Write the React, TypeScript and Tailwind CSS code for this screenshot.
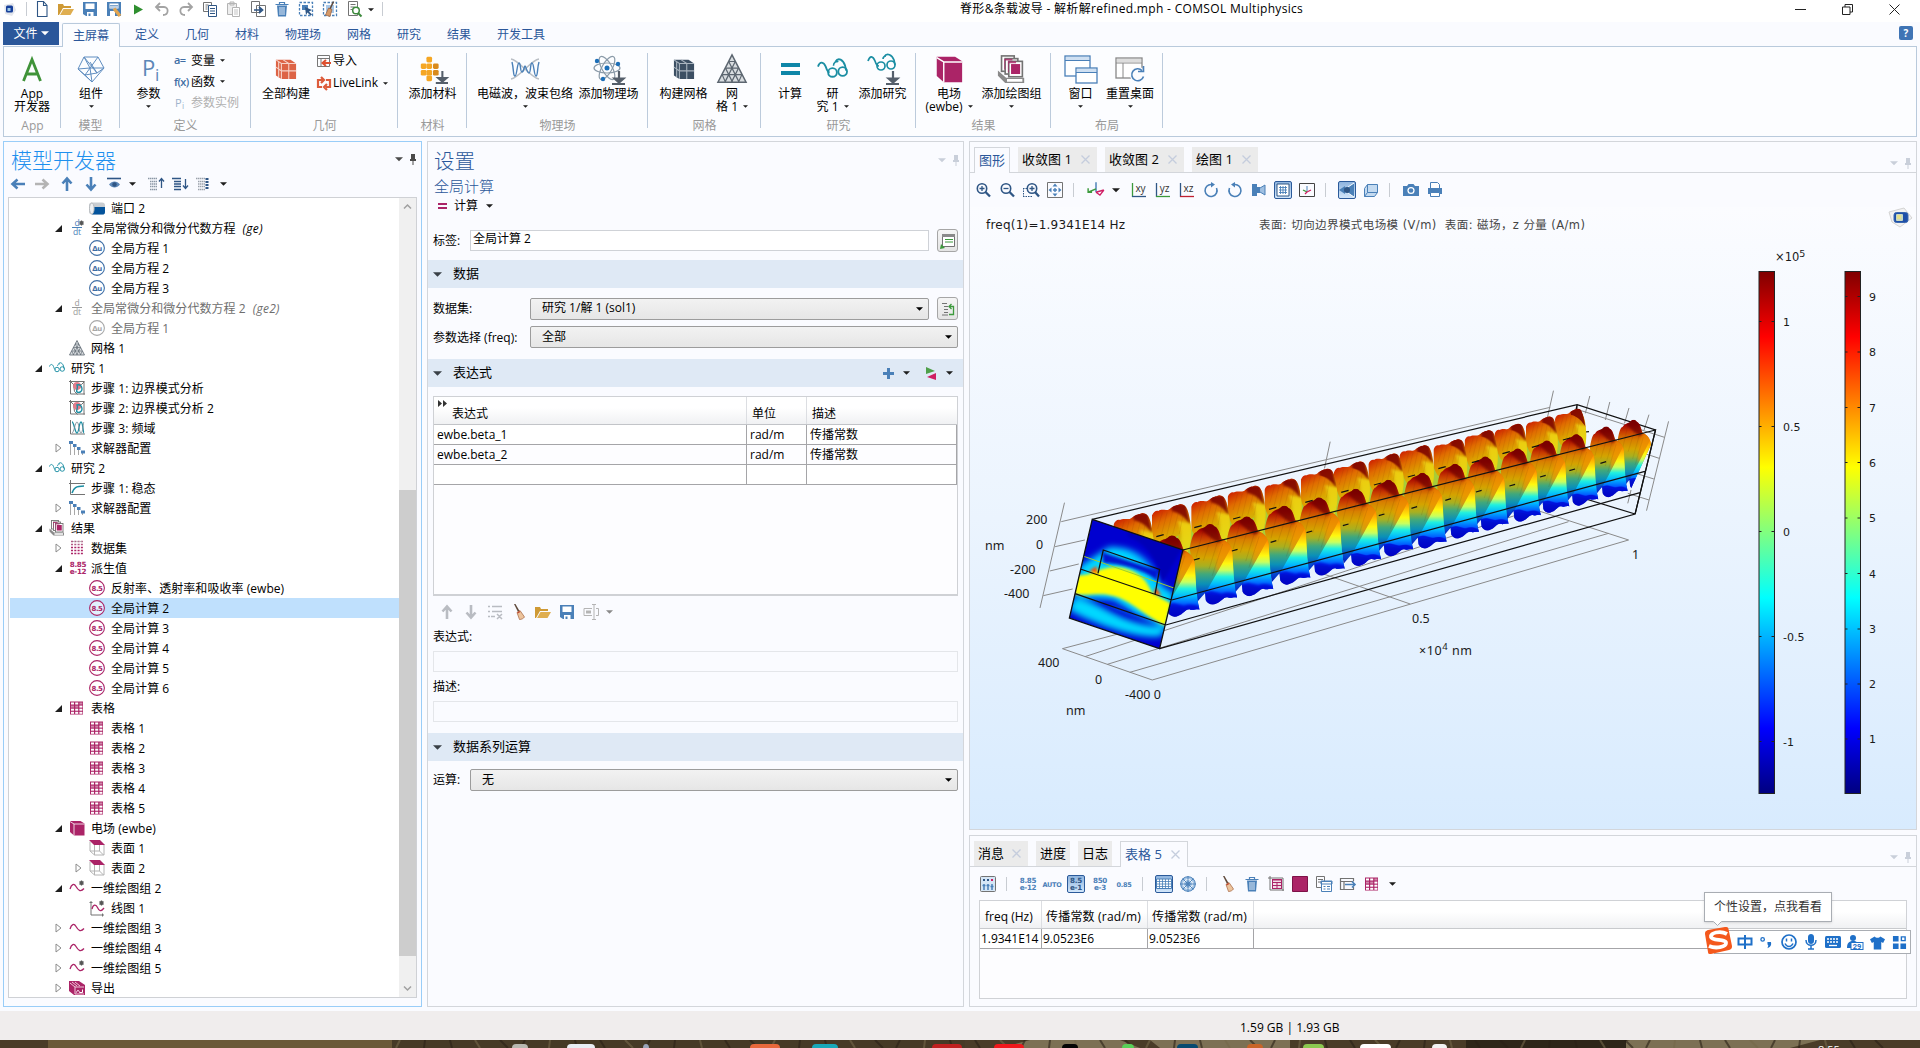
import React from "react";

const BLUE = "#4a80b8";
const NAVY = "#2f5685";
const MAG = "#ab2467";
const TEAL = "#1b8ea3";
const GRAY = "#737373";
const LG = "#b4b4b4";

type SvgProps = { w?: number; h?: number; vb?: string; children: React.ReactNode };
const Svg = ({ w = 16, h, vb = "0 0 16 16", children }: SvgProps) => (
  <svg width={w} height={h ?? w} viewBox={vb} fill="none" className="block shrink-0 overflow-visible">
    {children}
  </svg>
);

const Down = ({ c = "#1e1e1e", w = 7 }: { c?: string; w?: number }) => (
  <Svg w={w} h={w / 2 + 0.5} vb="0 0 8 4">
    <path d="M0 0h8L4 4z" fill={c} />
  </Svg>
);

const Pin = ({ c }: { c: string }) => (
  <div className="flex items-center gap-[6px]">
    <Down c={c} w={8} />
    <Svg w={8} h={11} vb="0 0 8 11">
      <path d="M2 0h4v5h1v2H4.5v4h-1V7H1V5h1z" fill={c} />
    </Svg>
  </div>
);

const wave = "M1 9c1.500-5 4-6 6-2.500S11.500 12.500 15 8.500";

const tableIcon = (
  <Svg>
    <rect x="1" y="1.500" width="13" height="13" fill={MAG} />
    {[0, 1, 2, 3].map((r) =>
      [0, 1, 2].map((c) => (
        <rect key={`${r}${c}`} x={2 + c * 4.200} y={2.500 + r * 3.100} width="3" height="2" fill={(r === 1 && c < 2) || (r === 0 && c === 2) ? "#cf86aa" : "#fff"} />
      ))
    )}
  </Svg>
);

const star = (
  <g stroke="#555" strokeWidth="1.100">
    <path d="M12.500 .5v5M10 3h5M10.700 1.200l3.600 3.600M14.300 1.200l-3.600 3.600" />
  </g>
);

const circleText = (t: string, c: string) => (
  <Svg>
    <circle cx="8" cy="8" r="7.400" stroke={c} strokeWidth="1.100" fill="#ffffff88" />
    <text x="8" y="10.500" textAnchor="middle" fontSize="7" fontWeight="700" fontFamily="DejaVu Sans" letterSpacing="-0.500" fill={c}>
      {t}
    </text>
  </Svg>
);

const ddt = (c: string, s: boolean) => (
  <Svg w={16} h={18} vb="0 -1 16 18">
    <text x="8" y="6" textAnchor="middle" fontSize="8.500" fontFamily="Open Sans" fill={c}>d</text>
    <path d="M3 7.500h10" stroke={c} />
    <text x="8" y="15" textAnchor="middle" fontSize="8.500" fontFamily="Open Sans" fill={c}>dt</text>
    {s && star}
  </Svg>
);

const meshTri = (w = 16) => (
  <Svg w={w} vb="0 0 32 32">
    <path d="M16 1L31 30H1z" fill="#d9dde0" stroke="#5c6670" strokeWidth="1.600" />
    <path d="M12.500 8h7M9 15h14M5.500 22h21M12.500 8l11 22M19.500 8L8.500 30M9 15l7.500 15M23 15l-7.500 15M5.500 22l3.500 8M26.500 22l-3.500 8" stroke="#5c6670" strokeWidth="1.300" />
  </Svg>
);

const glasses = (w = 16) => (
  <Svg w={w} vb="0 0 32 32">
    <path d="M1 13c2-6 6-5 8 0 1 3 2 6 4 6M19 8c3-5 8-2 10 4l1 5" stroke={TEAL} strokeWidth="1.900" />
    <circle cx="16" cy="19" r="4.500" stroke={TEAL} strokeWidth="1.900" />
    <circle cx="26.500" cy="18" r="4.500" stroke={TEAL} strokeWidth="1.900" />
    <path d="M17 12c0-3 3-5 5-4" stroke={TEAL} strokeWidth="1.600" />
  </Svg>
);

const cubeMag = (w = 16) => (
  <Svg w={w} vb="0 0 32 32">
    <path d="M2 2h21l8 5v24H10L2 24z" fill={MAG} />
    <path d="M2 3l8 5v23M10 8h21" stroke="#fff" strokeWidth="1.600" />
  </Svg>
);

const results = (w = 16) => (
  <Svg w={w} vb="0 0 32 32">
    <g fill="#fff" stroke={GRAY} strokeWidth="1.800">
      <rect x="5" y="1" width="14" height="17" />
      <rect x="9" y="4" width="14" height="17" />
      <rect x="13" y="7" width="15" height="17" />
    </g>
    <path d="M8 4h9v2H9v10H8zM12 7h9v2h-8v10h-1z" fill={MAG} opacity=".8" />
    <rect x="15.500" y="10" width="10" height="11" fill={MAG} />
    <path d="M1 17l9 8h20v6H9L1 23z" fill="#8a8a8a" />
    <path d="M11 26.500h17v3H11z" fill="#fff" />
  </Svg>
);

const steps = (
  <Svg>
    <path d="M1.500 4v11M5.500 6v9M9.500 9v6M13.500 12v3" stroke="#a8a8a8" />
    <path d="M0 1h4v3H0zM4 4h3.500v3H4zM8 7h3.500v3H8zM12 10.500h4v3h-4z" fill={BLUE} />
  </Svg>
);

const bma = (
  <Svg>
    <path d="M1.500 0v14H16M0 1.500h15v13M1.500 1.500l3 3h8l3-3M4.500 4.500l1 7 3 3" stroke={GRAY} />
    <path d="M5 3c3-2 6-1 7 2s-1 4-3 5-5-2-5-4z" fill="#e47c8c" />
    <path d="M8 5c3-1 5 1 5 4s-3 4-5 3 2-3 0-7z" stroke={TEAL} strokeWidth="1.400" />
  </Svg>
);

const surf = (
  <Svg>
    <path d="M1 1.500v9.500l4.500 4h9.500V4.500H5.500M5.500 4.500V15M1 11h9.500V4M10.500 11l4 4" stroke={LG} />
    <path d="M0 0h11l5 5H5z" fill={MAG} />
  </Svg>
);

const exportIcon = (
  <Svg>
    <path d="M0 1h10l6 4v10H5L0 11z" fill={MAG} />
    <path d="M1 3l5 4h9M3 2l5 4M6 2l5 4M6 7v7h9" stroke="#f0c8da" />
    <path d="M7.500 12.500c1-3 2-3 3 0h3v-3" stroke="#fff" />
  </Svg>
);

const port = (
  <Svg>
    <rect x="0" y="2.500" width="16" height="12" rx="3" fill="#c9cdd1" />
    <path d="M4 7h12v5c0 2-1 2.500-2.500 2.500H3c1-1 1.500-4 1-7.500z" fill="#04549c" />
    <ellipse cx="2.800" cy="8.500" rx="2.300" ry="5.500" fill="#eef0f2" stroke="#b5b9bd" />
  </Svg>
);

const step3 = (
  <Svg>
    <path d="M1.500 0v14H16" stroke={GRAY} />
    <path d="M3 2c2 0 3 11 5 11s2-11 4-11 2 11 3 11" stroke={TEAL} strokeWidth="1.300" />
    <path d="M3 13c2 0 3-11 5-11s2 11 4 11 2-11 3-11" stroke="#7c8a94" strokeWidth=".9" />
  </Svg>
);

const stationary = (
  <Svg>
    <path d="M1.500 0v14.500H16M0 3.500h16" stroke={GRAY} />
    <path d="M3 13c1.500-5 4-7 12-7" stroke={TEAL} strokeWidth="1.600" />
  </Svg>
);

const dataset = (
  <Svg>
    {[1, 4, 7, 10, 13].map((y, i) => (
      <path key={y} d={`M2 ${y}.500h12`} stroke={i < 2 ? "#b35b86" : MAG} strokeWidth="1.300" strokeDasharray="2 1.300" />
    ))}
    <path d="M4 1.500h9" stroke="#b9b9b9" strokeDasharray="2 1.300" />
  </Svg>
);

const sci = (a: string, b: string, c: string) => (
  <Svg w={18} h={16} vb="0 0 18 16">
    <text x="9" y="7" textAnchor="middle" fontSize="7.200" fontWeight="700" fontFamily="DejaVu Sans" fill={c} letterSpacing="-.3">{a}</text>
    <text x="9" y="14" textAnchor="middle" fontSize="7.200" fontWeight="700" fontFamily="DejaVu Sans" fill={c} letterSpacing="-.3">{b}</text>
  </Svg>
);

const sci1 = (a: string) => (
  <Svg w={18} h={16} vb="0 0 18 16">
    <text x="9" y="11" textAnchor="middle" fontSize="6.500" fontWeight="700" fontFamily="DejaVu Sans" fill={BLUE} letterSpacing="-.3">{a}</text>
  </Svg>
);

const waveIcon = (s: boolean) => (
  <Svg>
    <path d={wave} stroke={MAG} strokeWidth="1.300" />
    {s && star}
  </Svg>
);

const linePlot = (
  <Svg>
    <path d="M2 1v14h13M.5 2.500h3M13.500 13.500v3" stroke={GRAY} />
    <path d="M3 9c1-5 4-5 5.500-1.500S12 12 15 8" stroke={MAG} strokeWidth="1.300" />
    {star}
  </Svg>
);

type Row = { l: number; t: string; i: React.ReactNode; a?: "o" | "c"; it?: string; gray?: boolean; sel?: boolean };
const geq = circleText("Δu", "#3f6ea5");
const ev = circleText("8.5", MAG);
const rows: Row[] = [
  { l: 3, t: "端口 2", i: port },
  { l: 2, t: "全局常微分和微分代数方程", it: "(ge)", i: ddt(BLUE, true), a: "o" },
  { l: 3, t: "全局方程 1", i: geq },
  { l: 3, t: "全局方程 2", i: geq },
  { l: 3, t: "全局方程 3", i: geq },
  { l: 2, t: "全局常微分和微分代数方程 2", it: "(ge2)", i: ddt("#999", false), a: "o", gray: true },
  { l: 3, t: "全局方程 1", i: circleText("Δu", "#a8a8a8"), gray: true },
  { l: 2, t: "网格 1", i: meshTri() },
  { l: 1, t: "研究 1", i: glasses(), a: "o" },
  { l: 2, t: "步骤 1: 边界模式分析", i: bma },
  { l: 2, t: "步骤 2: 边界模式分析 2", i: bma },
  { l: 2, t: "步骤 3: 频域", i: step3 },
  { l: 2, t: "求解器配置", i: steps, a: "c" },
  { l: 1, t: "研究 2", i: glasses(), a: "o" },
  { l: 2, t: "步骤 1: 稳态", i: stationary },
  { l: 2, t: "求解器配置", i: steps, a: "c" },
  { l: 1, t: "结果", i: results(), a: "o" },
  { l: 2, t: "数据集", i: dataset, a: "c" },
  { l: 2, t: "派生值", i: sci("8.85", "e-12", MAG), a: "o" },
  { l: 3, t: "反射率、透射率和吸收率 (ewbe)", i: ev },
  { l: 3, t: "全局计算 2", i: ev, sel: true },
  { l: 3, t: "全局计算 3", i: ev },
  { l: 3, t: "全局计算 4", i: ev },
  { l: 3, t: "全局计算 5", i: ev },
  { l: 3, t: "全局计算 6", i: ev },
  { l: 2, t: "表格", i: tableIcon, a: "o" },
  { l: 3, t: "表格 1", i: tableIcon },
  { l: 3, t: "表格 2", i: tableIcon },
  { l: 3, t: "表格 3", i: tableIcon },
  { l: 3, t: "表格 4", i: tableIcon },
  { l: 3, t: "表格 5", i: tableIcon },
  { l: 2, t: "电场 (ewbe)", i: cubeMag(), a: "o" },
  { l: 3, t: "表面 1", i: surf },
  { l: 3, t: "表面 2", i: surf, a: "c" },
  { l: 2, t: "一维绘图组 2", i: waveIcon(true), a: "o" },
  { l: 3, t: "线图 1", i: linePlot },
  { l: 2, t: "一维绘图组 3", i: waveIcon(false), a: "c" },
  { l: 2, t: "一维绘图组 4", i: waveIcon(false), a: "c" },
  { l: 2, t: "一维绘图组 5", i: waveIcon(true), a: "c" },
  { l: 2, t: "导出", i: exportIcon, a: "c" },
];
const indent: Record<number, string> = { 1: "pl-[25px]", 2: "pl-[45px]", 3: "pl-[65px]" };

const TreeRow = ({ r }: { r: Row }) => (
  <div className={`flex h-5 shrink-0 items-center ${indent[r.l]} ${r.sel ? "bg-[#bfe0fd]" : ""} ${r.gray ? "text-[#6e6e6e]" : ""}`}>
    <div className="w-[14px] shrink-0">
      {r.a === "o" && (
        <Svg w={7} vb="0 0 7 7">
          <path d="M7 0v7H0z" fill="#1e1e1e" />
        </Svg>
      )}
      {r.a === "c" && (
        <Svg w={7} h={10} vb="0 0 7 10">
          <path d="M1 1l5 4-5 4z" stroke="#8c8c8c" />
        </Svg>
      )}
    </div>
    <div className="flex w-[22px] shrink-0 items-center">{r.i}</div>
    <span className="pt-[2px] tracking-[0.050px]">{r.t}</span>
    {r.it && <span className="ml-[7px] pt-[2px] tracking-[0.300px] italic">{r.it}</span>}
  </div>
);

/* ---------- shared toolbar icons ---------- */
const folder = (
  <Svg>
    <path d="M0 3h5l1 2h7v2H5l-4 7H0z" fill="#cf9a35" />
    <path d="M5.500 8H16l-3.500 6H2z" fill="#dfae50" />
  </Svg>
);
const save = (
  <Svg>
    <path d="M1 1h14v14H4l-3-2z" fill={BLUE} />
    <path d="M3.500 2.500h9v5.500h-9z" fill="#fff" />
    <path d="M5 11h6.500v4H5z" fill="#fff" />
    <path d="M6.500 12.500h2V15h-2z" fill={BLUE} />
  </Svg>
);
const broom = (
  <Svg>
    <path d="M3 0l1.500 0 4 7-1.500 1z" fill="#5f4a3c" />
    <path d="M6 8.500l3-2 4.500 6.500c-1 1.500-3 2.500-5 2.500z" fill="#ecc39c" stroke="#a4623c" strokeWidth=".7" />
    <path d="M6.500 9l2.500-1.500" stroke="#c0452d" strokeWidth="1.200" />
  </Svg>
);
const trash = (
  <Svg>
    <path d="M1.500 3.500h13M5.500 3V1.500h5V3" stroke={BLUE} strokeWidth="1.200" />
    <path d="M3 4.500h10l-1 11H4z" fill={BLUE} />
    <path d="M6 6v8M8 6v8M10 6v8" stroke="#e4eefa" />
  </Svg>
);
const doc = (c: string) => (
  <Svg>
    <path d="M1.500 1.500h8v9h-8z" fill="#fff" stroke={GRAY} />
    <path d="M3.500 4h3M3.500 6h2M3.500 8h2" stroke={GRAY} />
    <path d="M6.500 4.500h8v11h-8z" fill="#fff" stroke={c} />
    <path d="M8 7.500h5M8 10h5M8 12.500h5" stroke={c} />
  </Svg>
);
const dashed = <rect x="1.500" y="1.500" width="13" height="13" stroke={BLUE} strokeWidth="1.300" strokeDasharray="2.500 1.500" />;

const quick: React.ReactNode[] = [
  <Svg><path d="M3.500 .5h6l3.500 4v11H3.500zM9.500 .5v4H13" fill="#fff" stroke={NAVY} strokeWidth="1.100" /></Svg>,
  folder,
  save,
  <Svg><path d="M1 1h14v14H1z" fill={BLUE} /><path d="M3.500 2.500h9v5h-9zM4 10h5v5H4z" fill="#fff" /><path d="M4 4.500h8M4 6h8" stroke={BLUE} strokeWidth=".7" /><path d="M8 7.500l6 7.500" stroke="#e2a550" strokeWidth="3.400" /></Svg>,
  <Svg><path d="M4 3.500l9 5-9 5z" fill="#2f8f2f" /></Svg>,
  <Svg><path d="M2 6h8c5 0 5 8-1 8M6 2L2 6l4 4" stroke="#a3a3a3" strokeWidth="1.800" /></Svg>,
  <Svg><path d="M14 6H6c-5 0-5 8 1 8M10 2l4 4-4 4" stroke="#a3a3a3" strokeWidth="1.800" /></Svg>,
  doc(NAVY),
  <Svg><path d="M1.500 2.500h9v11h-9zM4 1h4v3H4z" fill="#eee" stroke={LG} /><path d="M6.500 6.500h7v9h-7z" fill="#fff" stroke={LG} /><path d="M8 9h4M8 11h4M8 13h4" stroke={LG} strokeWidth=".8" /></Svg>,
  <Svg><path d="M1.500 .5h8v11h-8zM6.500 4.500h9v11h-9z" fill="#fff" stroke={GRAY} /><path d="M4 9h7M9 6l3.500 3L9 12" stroke={NAVY} strokeWidth="1.700" /></Svg>,
  trash,
  <Svg>{dashed}<path d="M4 4h6v5H4z" fill={BLUE} /><path d="M7 6l7 3-3 1.500 3 3-1.500 1-3-3L8 14z" fill={NAVY} /></Svg>,
  <Svg>{dashed}<path d="M4 4h8v8H4z" fill="#a9c8e8" /><path d="M11.500 .5L8 8" stroke="#5f4a3c" strokeWidth="1.600" /><path d="M6.500 7l3.500 1.500-2 7-4.500-1.500z" fill="#d79a68" stroke="#8a4f2c" strokeWidth=".6" /></Svg>,
  <Svg><path d="M2.500 .5h9v14h-9z" fill="#fff" stroke={GRAY} /><path d="M4.500 3.500h5M4.500 6h4M4.500 8.500h2" stroke={GRAY} /><circle cx="10" cy="9.500" r="3.300" fill="#fff" stroke="#3c8a3c" strokeWidth="1.500" /><path d="M12 12l3.500 3.500" stroke="#3c8a3c" strokeWidth="2" /></Svg>,
];

const VLine = ({ h = "h-[14px]" }: { h?: string }) => <div className={`w-px bg-[#c8ccd2] ${h}`} />;

/* ---------- ribbon ---------- */
const plusDown = <path d="M26 18v8M21.500 25.500l4.500 4 4.500-4zM19 31h13" stroke="#555f6b" strokeWidth="2.200" fill="#555f6b" />;
type Btn = { w: string; icon: React.ReactNode; a: string; b?: string; dd?: boolean };
const Big = ({ w, icon, a, b, dd }: Btn) => (
  <div className={`flex shrink-0 flex-col items-center ${w}`}>
    <div className="flex h-[36px] items-center justify-center">{icon}</div>
    <div className="h-[13px] text-center leading-[13px] whitespace-nowrap">{a}</div>
    <div className="flex h-[13px] items-center justify-center gap-[5px] leading-[13px] whitespace-nowrap">
      {b && <span>{b}</span>}
      {dd && <Down w={5} />}
    </div>
  </div>
);
const Group = ({ w, label, children }: { w: string; label: string; children: React.ReactNode }) => (
  <div className={`relative flex h-full shrink-0 flex-col ${w}`}>
    <div className="flex h-[67px] pt-[4px]">{children}</div>
    <div className="mt-[4px] text-center leading-[16px] text-[#999]">{label}</div>
    <div className="absolute top-[6px] right-0 h-[75px] w-px bg-[#bccbdc]" />
  </div>
);
const Mini = ({ icon, t, dd, gray }: { icon: React.ReactNode; t: string; dd?: boolean; gray?: boolean }) => (
  <div className={`flex h-[22px] items-center whitespace-nowrap ${gray ? "text-[#b0b0b0]" : ""}`}>
    <div className="flex w-[17px] shrink-0 items-center">{icon}</div>
    <span>{t}</span>
    {dd && <span className="ml-[5px]"><Down w={5} /></span>}
  </div>
);

const atom = (
  <Svg w={32} vb="0 0 32 32">
    <g stroke="#8a9aa8" strokeWidth="1.200">
      <ellipse cx="14" cy="15" rx="13" ry="5" />
      <ellipse cx="14" cy="15" rx="13" ry="5" transform="rotate(60 14 15)" />
      <ellipse cx="14" cy="15" rx="13" ry="5" transform="rotate(120 14 15)" />
    </g>
    <g fill="#1d6fb8">
      <circle cx="14" cy="15" r="2.500" /><circle cx="4" cy="8" r="2.200" /><circle cx="25" cy="11" r="2.200" /><circle cx="10" cy="26" r="2.200" />
    </g>
    {plusDown}
  </Svg>
);
const brick = (w: number, f: string, s: string) => (
  <Svg w={w} vb="0 0 24 24">
    <path d="M1 2h16l6 4v17H7L1 19z" fill={f} />
    <path d="M1 2l6 4h16M7 6v17M1 10l6 4h16M15 6v17M9 2l6 4M4 4v17" stroke={s} strokeWidth="1.200" />
  </Svg>
);
const windowIcon = (
  <Svg w={34} h={32} vb="0 0 34 32">
    <g fill="#fff" stroke={BLUE} strokeWidth="1.300">
      <rect x="1" y="3" width="25" height="20" /><rect x="12" y="15" width="21" height="15" />
    </g>
    <path d="M2 4h23v3H2zM13 16h19v3H13z" fill="#cfe0f2" />
    <path d="M1 7.500h25M12 19.500h21" stroke={BLUE} />
  </Svg>
);
const resetIcon = (
  <Svg w={30} h={28} vb="0 0 30 28">
    <rect x="1" y="3" width="26" height="20" fill="#fff" stroke="#888" strokeWidth="1.300" />
    <path d="M2 4h24v3H2z" fill="#ddd" /><path d="M1 8h26M8 8v15" stroke="#888" />
    <circle cx="23" cy="20" r="8" fill="#fbfcff" />
    <path d="M27 15.500a6 6 0 1 0 1.500 6M28.500 11v5.500H23" stroke={BLUE} strokeWidth="1.600" />
  </Svg>
);

const Ribbon = () => (
  <div className="mx-[3px] flex h-[90px] border-x border-b border-[#b9cadc] bg-[#fcfdff]">
    <Group w="w-[57px]" label="App">
      <Big w="w-[56px]" icon={<Svg w={24} h={30} vb="0 0 24 30"><path d="M3.500 27L12 5.500L20.500 27M6.500 20h11" stroke="#3f9339" strokeWidth="2.800" /></Svg>} a="App" b="开发器" />
    </Group>
    <Group w="w-[59px]" label="模型">
      <Big w="ml-[1px] w-[58px]" a="组件" dd icon={
        <Svg w={28} vb="0 0 28 28">
          <path d="M7 2h14l6 11-12 14L1 14zM7 2l6 11-12 1M13 13l14 0M13 13l2 14M21 2L8 20M7 2l13 16M1 14l7 6 7 7M20 18l-12 2M20 18l7-5M13 7l7 11" stroke="#5f8dc0" strokeWidth="1" />
        </Svg>} />
    </Group>
    <Group w="w-[131px]" label="定义">
      <Big w="ml-[3px] w-[51px]" a="参数" dd icon={
        <Svg w={28} h={34} vb="0 0 28 34">
          <text x="7" y="24" fontSize="22" fontFamily="Open Sans" fill="#5b87b8">P</text>
          <text x="20" y="29" fontSize="17" fontFamily="Open Sans" fill="#5b87b8">i</text>
        </Svg>} />
      <div className="-mt-[1px] flex flex-col">
        <Mini t="变量" dd icon={<span className="text-[11px] font-semibold tracking-tighter text-[#3f6ea5]">a=</span>} />
        <Mini t="函数" dd icon={<span className="text-[11px] font-semibold tracking-tighter text-[#3f6ea5]">f(x)</span>} />
        <Mini t="参数实例" gray icon={<Svg><text x="1" y="12" fontSize="11" fontFamily="Open Sans" fill="#9fb4cc">P</text><text x="8" y="14" fontSize="8.500" fontFamily="Open Sans" fill="#9fb4cc">i</text></Svg>} />
      </div>
    </Group>
    <Group w="w-[147px]" label="几何">
      <Big w="ml-[5px] w-[60px]" a="全部构建" icon={brick(22, "#dd6446", "#f6d2c8")} />
      <div className="-mt-[1px] flex flex-col">
        <Mini t="导入" icon={<Svg><path d="M1.500 2.500h12v11h-12zM1.500 5.500h12M5 5.500v8" stroke="#777" /><path d="M15 10H7M10 7l-3.500 3 3.500 3" stroke="#dd5030" strokeWidth="2" /></Svg>} />
        <Mini t="LiveLink" dd icon={<Svg><path d="M6 12H2V5h5M10 12h4V5h-4M5 2l3 3-3 3M11 9l-3 3 3 3" stroke="#dd5c3c" strokeWidth="2.200" /></Svg>} />
      </div>
    </Group>
    <Group w="w-[69px]" label="材料">
      <Big w="w-[69px]" a="添加材料" icon={
        <Svg w={30} vb="0 0 32 32">
          {[[9, 3], [3, 10], [9, 10], [16, 10], [3, 17], [9, 17], [16, 17], [9, 23]].map(([x, y]) => (
            <rect key={`${x}-${y}`} x={x} y={y} width="6" height="6" rx="1.500" fill={x > 10 ? "#d98a1c" : "#f5a623"} />
          ))}
          {plusDown}
        </Svg>} />
    </Group>
    <Group w="w-[181px]" label="物理场">
      <Big w="ml-[3px] w-[110px]" a="电磁波，波束包络" dd icon={
        <Svg w={30} vb="0 0 30 30">
          <path d="M1 5c8 1 20 19 28 20M1 25C9 24 21 6 29 5" stroke="#b9bec4" strokeWidth="1.600" />
          <path d="M2 8c2 8 1 14 3 14s2-13 4-13 1 9 3 9 2-6 3-6 2 7 4 7 1-10 3-10 2 13 4 13 1-8 3-14" stroke="#4a80b8" strokeWidth="1.400" />
        </Svg>} />
      <Big w="w-[57px]" a="添加物理场" icon={atom} />
    </Group>
    <Group w="w-[113px]" label="网格">
      <Big w="w-[71px]" a="构建网格" icon={brick(22, "#3c4f63", "#a9b4bf")} />
      <Big w="w-[26px]" a="网" b="格 1" dd icon={meshTri(30)} />
    </Group>
    <Group w="w-[155px]" label="研究">
      <Big w="w-[58px]" a="计算" icon={<div className="flex flex-col gap-[4px]"><div className="h-[4px] w-[19px] bg-[#0e86a8]" /><div className="h-[4px] w-[19px] bg-[#0e86a8]" /></div>} />
      <Big w="w-[27px]" a="研" b="究 1" dd icon={glasses(31)} />
      <Big w="ml-[2px] w-[69px]" a="添加研究" icon={
        <Svg w={32} vb="0 0 32 32">
          <path d="M1 8c2-6 5-5 7 0 1 3 2 5 4 5M17 4c3-5 8-2 10 3l1 5M16 6c0-2 2-3 3-3" stroke={TEAL} strokeWidth="1.700" />
          <circle cx="14" cy="13" r="4" stroke={TEAL} strokeWidth="1.700" /><circle cx="24" cy="12" r="4" stroke={TEAL} strokeWidth="1.700" />
          {plusDown}
        </Svg>} />
    </Group>
    <Group w="w-[135px]" label="结果">
      <Big w="w-[66px]" a="电场" b="(ewbe)" dd icon={cubeMag(28)} />
      <Big w="w-[59px]" a="添加绘图组" dd icon={results(29)} />
    </Group>
    <Group w="w-[112px]" label="布局">
      <Big w="ml-[2px] w-[55px]" a="窗口" dd icon={windowIcon} />
      <Big w="w-[44px]" a="重置桌面" dd icon={resetIcon} />
    </Group>
  </div>
);

/* ---------- model builder ---------- */
const arrow = (rot: number, c: string, w = 16) => (
  <Svg w={w}>
    <path d="M15 8H3M7.500 3.500L2.500 8l5 4.500" stroke={c} strokeWidth="2.600" transform={`rotate(${rot} 8 8)`} />
  </Svg>
);
const listIcon = (c: string, up: number) => (
  <Svg>
    <path d="M0 2.500h9M2 5.500h7M2 8h7M2 10.500h7M2 13.500h7" stroke={c} strokeWidth="1.300" strokeDasharray={up ? "1.500 .5" : undefined} />
    {up !== 2 && <path d={up === 0 ? "M13.500 3v9M11 9.500l2.500 3 2.500-3" : "M13.500 12V3M11 5.500L13.500 2.500l2.500 3"} stroke={NAVY} strokeWidth="1.300" />}
    {up === 2 && <path d="M11 2v12" stroke={NAVY} strokeWidth="3" strokeDasharray="2 1" />}
  </Svg>
);

const ModelBuilder = () => (
  <section className="flex w-[419px] shrink-0 flex-col border border-[#99cdf8] px-[4px]">
    <div className="flex h-[34px] items-center justify-between pl-[3px]">
      <h1 className="pt-[2px] text-[21px] leading-[30px] font-light text-[#1e90ee]">模型开发器</h1>
      <Pin c="#4a4a4a" />
    </div>
    <div className="flex h-[21px] items-center pb-[5px]">
      <div className="flex w-[20px] justify-center">{arrow(0, BLUE)}</div>
      <div className="flex w-[27px] justify-center">{arrow(180, "#b4b4b4")}</div>
      <div className="flex w-[23px] justify-center">{arrow(90, BLUE)}</div>
      <div className="flex w-[26px] justify-center">{arrow(270, BLUE)}</div>
      <div className="flex w-[20px] justify-center">
        <Svg><path d="M1 2.500h14" stroke={NAVY} strokeWidth="1.600" /><path d="M3 8.500c3-4 8-4 11 0-3 4-8 4-11 0z" fill="#5d88b8" /><circle cx="8.500" cy="8.500" r="2.200" fill={NAVY} /></Svg>
      </div>
      <div className="flex w-[17px] justify-center"><Down /></div>
      <div className="ml-[3px] flex w-[24px] justify-center">{listIcon("#8b97a5", 1)}</div>
      <div className="flex w-[24px] justify-center">{listIcon(NAVY, 0)}</div>
      <div className="flex w-[24px] justify-center">{listIcon("#9aa1aa", 2)}</div>
      <div className="flex w-[14px] justify-center"><Down /></div>
    </div>
    <div className="flex h-[801px] border border-[#cfd1d5] bg-white">
      <div className="flex flex-1 flex-col overflow-hidden pl-px text-[12px] leading-[18px] whitespace-nowrap">
        {rows.map((r, k) => (
          <TreeRow key={k} r={r} />
        ))}
      </div>
      <div className="flex w-[17px] flex-col items-center bg-[#f0f0f0]">
        <div className="flex h-[17px] items-center"><Svg w={9} vb="0 0 9 9"><path d="M1 6.500l3.500-3.500L8 6.500" stroke="#a0a0a0" strokeWidth="1.500" /></Svg></div>
        <div className="mt-[275px] h-[466px] w-full bg-[#cdcdcd]" />
        <div className="mt-auto flex h-[17px] items-center"><Svg w={9} vb="0 0 9 9"><path d="M1 2.500L4.500 6 8 2.500" stroke="#a0a0a0" strokeWidth="1.500" /></Svg></div>
      </div>
    </div>
  </section>
);

/* ---------- settings ---------- */
const Section = ({ t, mt, children }: { t: string; mt: string; children?: React.ReactNode }) => (
  <div className={`flex h-[28px] shrink-0 items-center bg-[#dfe9f5] pr-[10px] pl-[5px] ${mt}`}>
    <Down c="#3a4046" w={9} />
    <span className="ml-[11px] pb-px text-[13px]">{t}</span>
    {children}
  </div>
);
const Select = ({ t, w }: { t: string; w: string }) => (
  <div className={`flex h-[22px] items-center justify-between rounded-[2px] border border-[#9c9c9c] bg-linear-to-b from-[#f2f2f2] to-[#e6e6e6] pr-[5px] pl-[11px] ${w}`}>
    <span className="pb-px">{t}</span>
    <Down c="#000" w={7} />
  </div>
);
const SideBtn = ({ children }: { children: React.ReactNode }) => (
  <div className="flex h-[23px] w-[21px] items-center justify-center rounded-[3px] border border-[#a6a6a6] bg-linear-to-b from-[#f5f5f5] to-[#e4e4e4]">{children}</div>
);
const exprCells = [
  ["ewbe.beta_1", "rad/m", "传播常数"],
  ["ewbe.beta_2", "rad/m", "传播常数"],
  ["", "", ""],
];

const Settings = () => (
  <section className="flex w-[537px] shrink-0 flex-col border border-[#d3d6db]">
    <div className="flex h-[36px] items-center justify-between pr-[3px] pl-[6px]">
      <h1 className="pt-[2px] text-[20.500px] leading-[30px] font-light text-[#2b579a]">设置</h1>
      <Pin c="#c9cfda" />
    </div>
    <div className="-mt-px pb-px pl-[6px] text-[15px] leading-[18px] font-light text-[#2b579a]">全局计算</div>
    <div className="flex h-[19px] items-center pl-[10px]">
      <div className="flex w-[9px] flex-col gap-[2px]"><div className="h-[2px] bg-[#ab2467]" /><div className="h-[2px] bg-[#ab2467]" /></div>
      <span className="mr-[8px] ml-[7px]">计算</span>
      <Down w={7} />
    </div>
    <div className="mt-[14px] flex h-[23px] items-center pl-[5px]">
      <span className="w-[37px]">标签:</span>
      <div className="mr-[8px] flex h-[21px] w-[459px] items-center border border-[#cfd2d7] bg-white pb-[3px] pl-[2px]">全局计算 2</div>
      <SideBtn><Svg><path d="M2.500 1.500h12v12h-12z" fill="#fff" stroke={GRAY} /><path d="M2 1h13v3H2z" fill="#8a8a8a" /><path d="M5 6.500h8M5 9h8" stroke="#3c9a3c" /><path d="M0 16l1-5 4 4z" fill="#3c9a3c" /></Svg></SideBtn>
    </div>
    <Section t="数据" mt="mt-[8px]" />
    <div className="mt-[9px] flex h-[23px] items-center pl-[5px]">
      <span className="w-[97px] pt-px">数据集:</span>
      <Select t="研究 1/解 1 (sol1)" w="mr-[8px] w-[399px]" />
      <SideBtn><Svg><path d="M2 2.500h5M4 5.500h4M4 8.500h4M4 11.500h4M2 14h6" stroke={GRAY} /><path d="M9 13.500h4.500v-8H9M11.500 3L9 5.500 11.500 8" stroke="#3c9a3c" strokeWidth="1.300" /></Svg></SideBtn>
    </div>
    <div className="mt-[6px] flex h-[22px] items-center pl-[5px]">
      <span className="w-[97px] pt-px">参数选择 (freq):</span>
      <Select t="全部" w="w-[428px]" />
    </div>
    <Section t="表达式" mt="mt-[11px]">
      <div className="ml-auto flex items-center">
        <Svg w={11} vb="0 0 11 11"><path d="M5.500 0v11M0 5.500h11" stroke={BLUE} strokeWidth="3" /></Svg>
        <div className="ml-[9px]"><Down /></div>
        <div className="ml-[16px]"><Svg w={11} h={13} vb="0 0 11 13"><path d="M0 0l9 4-9 3z" fill="#4fa04a" /><path d="M10 6v7L1 10z" fill="#cf1d62" /></Svg></div>
        <div className="ml-[9px]"><Down /></div>
      </div>
    </Section>
    <div className="mx-[5px] mt-[9px] flex h-[200px] shrink-0 flex-col border border-b-2 border-[#cfd1d5] bg-[#fdfdff]">
      <div className="flex h-[27px] bg-linear-to-b from-white from-40% to-[#f0f1f3]">
        <div className="relative w-[313px] border-r border-[#dcdee2] pt-[6px] pl-[18px] leading-[21px]">
          表达式
          <div className="absolute top-[3px] left-[4px]"><Svg w={9} h={7} vb="0 0 9 7"><path d="M0 0l4 3.500L0 7zM5 0l4 3.500L5 7z" fill="#333" /></Svg></div>
        </div>
        <div className="w-[60px] border-r border-[#dcdee2] pt-[6px] pl-[5px] leading-[21px]">单位</div>
        <div className="pt-[6px] pl-[5px] leading-[21px]">描述</div>
      </div>
      <div className="flex flex-col border-t border-[#c2c4c8]">
        {exprCells.map((r, k) => (
          <div key={k} className={`flex h-[20px] border-b border-[#a5a5a8] leading-[19px] ${k === 1 ? "" : "bg-white"}`}>
            <div className="w-[313px] border-r border-[#a5a5a8] pl-[3px]">{r[0]}</div>
            <div className="w-[60px] border-r border-[#a5a5a8] pl-[3px]">{r[1]}</div>
            <div className="flex-1 border-r border-[#a5a5a8] pl-[3px]">{r[2]}</div>
          </div>
        ))}
      </div>
    </div>
    <div className="mt-[4px] flex h-[24px] items-center pl-[7px]">
      {[
        arrow(90, "#b9bcc2"),
        arrow(270, "#b9bcc2"),
        <Svg><path d="M1 2.500h2M5 2.500h10M1 7.500h2M5 7.500h10M1 12.500h2M4 12.500h4M10 10l5 5M15 10l-5 5" stroke="#b9bcc2" strokeWidth="1.500" /></Svg>,
        broom, folder, save,
        <Svg><path d="M1 4.500h8M1 4.500v7h8M13 4.500h2.500v7H13M11 1v14M9 .5h4M9 15.500h4" stroke="#b4b4b4" /><path d="M3 6.500h5v3H3z" fill="#b4b4b4" /></Svg>,
      ].map((ic, k) => (
        <div key={k} className="flex w-[24px] justify-center">{ic}</div>
      ))}
      <div className="ml-[3px]"><Down c="#8a8a8a" /></div>
    </div>
    <div className="mt-[4px] pl-[5px] leading-[18px]">表达式:</div>
    <div className="mx-[5px] mt-[5px] h-[21px] shrink-0 border border-[#e4e6ea]" />
    <div className="mt-[6px] pl-[5px] leading-[18px]">描述:</div>
    <div className="mx-[5px] mt-[5px] h-[21px] shrink-0 border border-[#e4e6ea]" />
    <Section t="数据系列运算" mt="mt-[11px]" />
    <div className="mt-[8px] flex h-[22px] items-center pl-[5px]">
      <span className="w-[37px]">运算:</span>
      <Select t="无" w="w-[488px]" />
    </div>
  </section>
);

/* ---------- graphics ---------- */
const back: number[][] = [[252, 400], [345, 373], [440, 347], [528, 318], [617, 297], [705, 267], [785, 245], [868, 221], [943, 196], [1025, 178], [1100, 151], [1172, 132], [1248, 110], [1318, 87]];
const front: number[][] = [[325, 467], [418, 433], [508, 410], [600, 378], [685, 353], [775, 327], [855, 300], [938, 279], [1018, 252], [1092, 230], [1172, 206], [1243, 182], [1315, 163], [1388, 140], [1455, 120]];
const GL = ({ d, c = "#8a8a8a", w = 1 }: { d: string; c?: string; w?: number }) => (
  <path d={d} stroke={c} strokeWidth={w} vectorEffect="non-scaling-stroke" fill="none" />
);

const Bar = ({ x, ticks, id }: { x: number; ticks: [number, string][]; id: string }) => (
  <g>
    <rect x={x} y="271.500" width="15.500" height="522" fill={`url(#${id})`} stroke="#222" strokeWidth="1" />
    {ticks.map(([y, t]) => (
      <g key={t}>
        <path d={`M${x} ${y}h2.500M${x + 15.500} ${y}h-3`} stroke="#222" />
        <text x={x + 24} y={y + 4}>{t}</text>
      </g>
    ))}
  </g>
);

const Plot = () => (
  <svg width="946" height="622" viewBox="970 207 946 622" className="block shrink-0" fontFamily="'DejaVu Sans','Noto Sans CJK SC',sans-serif" fontSize="11.500" fill="#1a1a1a">
    <defs>
      <linearGradient id="bg" x1="0" y1="0" x2="0" y2="1">
        <stop offset="0" stopColor="#fbfcff" /><stop offset=".5" stopColor="#ebf4fe" /><stop offset="1" stopColor="#d8ebfe" />
      </linearGradient>
      <linearGradient id="jet" x1="0" y1="0" x2="0" y2="1">
        <stop offset="0" stopColor="#800000" /><stop offset=".125" stopColor="#f00" /><stop offset=".375" stopColor="#ff0" /><stop offset=".5" stopColor="#80ff80" /><stop offset=".625" stopColor="#0ff" /><stop offset=".875" stopColor="#00f" /><stop offset="1" stopColor="#000080" />
      </linearGradient>
      <linearGradient id="wall" x1="0" y1="0" x2="0" y2="1">
        <stop offset="0" stopColor="#800000" /><stop offset=".09" stopColor="#a80800" /><stop offset=".18" stopColor="#c83c00" /><stop offset=".3" stopColor="#d88000" /><stop offset=".42" stopColor="#d4a400" /><stop offset=".52" stopColor="#a8b020" /><stop offset=".62" stopColor="#40a87c" /><stop offset=".74" stopColor="#0a90b8" /><stop offset=".87" stopColor="#0440d0" /><stop offset="1" stopColor="#0000a0" />
      </linearGradient>
      <linearGradient id="face" x1="0" y1="0" x2="0" y2="1">
        <stop offset="0" stopColor="#ff7800" /><stop offset=".14" stopColor="#ffb400" /><stop offset=".32" stopColor="#fff810" /><stop offset=".44" stopColor="#c8ff60" /><stop offset=".56" stopColor="#20f0e0" /><stop offset=".7" stopColor="#00b8ff" /><stop offset=".86" stopColor="#0050ff" /><stop offset="1" stopColor="#0010e0" />
      </linearGradient>
      <linearGradient id="backw" x1="0" y1="0" x2=".35" y2="1">
        <stop offset="0" stopColor="#b00000" /><stop offset=".14" stopColor="#cc1c00" /><stop offset=".34" stopColor="#e06c00" /><stop offset=".56" stopColor="#dca400" /><stop offset=".76" stopColor="#c8c010" /><stop offset="1" stopColor="#90d050" />
      </linearGradient>
      <clipPath id="sq"><path d="M128 418L350 510L293 806L72 714z" /></clipPath>
      <clipPath id="vol"><path d="M128 418L1316 60L1345 150L1400 130L1460 100L1505 172L1440 348L1330 420L310 760z" /></clipPath>
      <filter id="b1" x="-30%" y="-30%" width="160%" height="160%"><feGaussianBlur stdDeviation="9" /></filter>
      <filter id="b2" x="-30%" y="-30%" width="160%" height="160%"><feGaussianBlur stdDeviation="4" /></filter>
      <filter id="b3" x="-30%" y="-30%" width="160%" height="160%"><feGaussianBlur stdDeviation="2.500" /></filter>
      <clipPath id="bu"><path d="M-72 34C-68 22 -62 18 -56 20C-46 12 -36 22 -28 14C-18 4 -10 2 -6 1C0 -4 4 0 10 4C20 16 24 50 26 80C28 110 20 150 0 190L-72 170z" /></clipPath>
      <clipPath id="fu"><path d="M-52 72C-46 34 -42 26 -36 24C-26 8 -18 14 -10 4C-4 -3 4 -2 9 6C17 8 22 24 27 44C40 50 52 62 54 84L58 160L62 200L66 222C60 218 52 224 44 222C34 216 26 236 14 240C4 248 -8 240 -12 230L-14 208L-34 236z" /></clipPath>
    </defs>
    <rect x="970" y="207" width="946" height="622" fill="url(#bg)" />
    <g transform="translate(1040 380) scale(.40816 .33333)">
      <GL d="M60 368L0 684M52 425L1250 82M37 500L110 480M24 573L95 552M8 647L80 627M1258 32L1240 130M711 185L697 265M1347 48L1336 100M1396 66L1385 120M1443 84L1432 130M1492 104L1480 150M1540 124L1486 392M1316 88L1530 172M1480 220L1517 235M1460 280L1504 297M1440 340L1492 360M55 806L275 900L1442 480L1220 392M55 806L290 730M110 830L1180 400M165 853L1295 425M220 877L1393 460M907 672L690 580M1440 370L1448 330" />
      <GL d="M128 418L1316 74L1508 150L1458 402L293 806M1316 74L1300 160L1345 155M1265 330L1458 402M1316 74L1314 110" c="#111" w={1.200} />
      <g clipPath="url(#vol)">
        {back.slice().reverse().map(([x, y], k) => {
          const f = k / 13;
          return (
            <g key={k} transform={`translate(${x} ${y}) scale(${0.78 + 0.22 * f} ${0.88 + 0.12 * f})`}>
              {k > 0 && <path d="M10 20C22 50 26 90 40 100L88 66L74 150L-20 190z" fill="#a8cc38" />}
              <g clipPath="url(#bu)">
                <path d="M-80 -5h120v200h-120z" fill="url(#backw)" />
                <path d="M-26 0H12L24 62C14 44 0 26 -22 20z" fill="#780000" opacity=".85" filter="url(#b3)" />
                <path d="M-8 50C4 80 6 120 -14 170L30 190V60z" fill="#f0dc18" opacity=".75" filter="url(#b2)" />
                <path d="M-46 24L-58 74M-34 24L-48 90M-20 20L-36 100M-6 25L-20 90M6 30L-4 90" stroke="#7c3000" strokeWidth=".8" opacity=".4" />
              </g>
            </g>
          );
        })}
        {front.slice().reverse().map(([x, y], k) => {
          const f = k / 14;
          return (
            <g key={k} transform={`translate(${x} ${y}) scale(${0.77 + 0.23 * f} ${0.86 + 0.14 * f})`}>
              <g clipPath="url(#fu)">
                <path d="M-60 -4h140v250H-60z" fill="url(#wall)" />
                <path d="M-22 0H14L28 48C20 64 4 44 -22 18z" fill="#700000" opacity=".75" filter="url(#b2)" />
                <path d="M30 44L60 60L54 96C40 116 28 130 14 150C12 110 18 74 30 44z" fill="#f89000" opacity=".6" filter="url(#b2)" />
                <path d="M53 66C58 90 56 130 62 200L70 232C44 222 20 214 -14 210C10 160 34 110 53 66z" fill="url(#face)" />
                <path d="M2 202L-16 206V250H80V222L62 212C54 206 40 204 28 210z" fill="#0000d0" opacity=".75" filter="url(#b3)" />
                <path d="M4 30L-18 110M18 50L-4 136M30 60L4 156M-20 24L-36 100" stroke="#5c3000" strokeWidth=".9" opacity=".4" />
              </g>
            </g>
          );
        })}
      </g>
      <g clipPath="url(#sq)">
        <path d="M60 400h300v420H60z" fill="#0000d0" />
        <g filter="url(#b1)">
          <path d="M150 520C190 480 260 510 290 590L320 660L230 600L110 590z" fill="#0090ff" />
          <path d="M95 560L170 500C220 500 270 550 285 610L330 640L310 745L230 700L180 660L85 650z" fill="#00d8ff" />
          <path d="M80 655C140 650 190 740 310 740L296 770C230 776 130 730 70 690z" fill="#00d8ff" />
        </g>
        <path d="M152 516L290 572L286 600C250 570 200 550 155 550z" fill="#0018d0" filter="url(#b2)" />
        <g filter="url(#b2)">
          <path d="M92 585C130 590 140 560 190 562C240 570 262 600 275 640L320 670L308 738C260 710 220 660 180 648C140 636 120 650 82 642z" fill="#ffff00" />
          <path d="M160 675C190 670 220 690 240 712C215 705 190 695 160 675z" fill="#0040e0" />
          <path d="M120 574l22 8-4-24zM278 642l20 6-14-28z" fill="#ff5000" />
          <path d="M215 440L350 500L300 610C290 540 260 490 215 470z" fill="#0000b8" />
        </g>
        <GL d="M105 528L335 627" c="#9ccf30" w={1} />
      </g>
      <GL d="M128 418L350 510L293 806L72 714zM99 567L323 660M86 641L308 735M142 580L155 510L293 568L282 642" c="#111" w={1.300} />
      <GL d="M350 510L1508 150L1458 402M323 660L1482 274M308 735L1470 338" c="#111" w={1.200} />
      {back.slice(0, 13).map(([x, y], k) => (
        <GL key={k} d={`M${x + 33} ${y + 70}l18 -6M${x + 125} ${y + 140}l14 -5`} c="#111" w={1.200} />
      ))}
    </g>
    <text x="986" y="229" textLength="139" fontSize="12">freq(1)=1.9341E14 Hz</text>
    <text x="1259" y="229" textLength="326" fontSize="11.500" fill="#444" xmlSpace="preserve">{"表面: 切向边界模式电场模 (V/m)  表面: 磁场，z 分量 (A/m)"}</text>
    <g fontFamily="'Noto Sans',sans-serif" fontSize="12.500">
      <text x="1026" y="524">200</text>
      <text x="985" y="550">nm</text>
      <text x="1036" y="549">0</text>
      <text x="1010" y="574">-200</text>
      <text x="1004" y="598">-400</text>
      <text x="1038" y="667">400</text>
      <text x="1095" y="684">0</text>
      <text x="1125" y="699">-400 0</text>
      <text x="1066" y="715">nm</text>
      <text x="1412" y="623">0.5</text>
      <text x="1419" y="655" textLength="53">×10<tspan dy="-5" fontSize="9.500">4</tspan><tspan dy="5"> nm</tspan></text>
      <text x="1632" y="559">1</text>
    </g>
    <g fontSize="11">
      <text x="1775" y="261" fontSize="11.500">×10<tspan dy="-4" fontSize="9.500">5</tspan></text>
      <Bar x={1759} id="jet" ticks={[[321.500, "1"], [426.500, "0.5"], [531.500, "0"], [636.500, "-0.5"], [741.500, "-1"]]} />
      <Bar x={1845} id="jet" ticks={[[296.500, "9"], [352, "8"], [407.500, "7"], [462.500, "6"], [518, "5"], [573.500, "4"], [629, "3"], [684, "2"], [739, "1"]]} />
    </g>
    <path d="M1889 212l15-4 8 10-12 9-8-5z" fill="#f2f2f2" stroke="#d4d4d4" />
    <rect x="1894" y="212.500" width="14" height="10" rx="2.500" fill="#1e4fa8" stroke="#3a68b0" />
    <rect x="1896" y="214" width="7" height="7" rx="1" fill="#c8d8c0" />
    <rect x="1897" y="215" width="4" height="4" rx="1" fill="#e6e08a" />
  </svg>
);

const Tab = ({ t, w, on, x }: { t: string; w: string; on?: boolean; x?: boolean }) => (
  <div className={`flex items-center justify-between text-[13px] whitespace-nowrap ${w} ${on ? "h-[26px] border border-b-0 border-[#d3d6db] bg-[#fafbff] text-[#2b579a]" : "mb-px h-[25px] bg-[#ebebeb]"} ${x ? "pr-[7px] pl-[4px]" : "justify-center"}`}>
    <span>{t}</span>
    {x && <Svg w={9} vb="0 0 9 9"><path d="M.5 .5l8 8M8.500 .5l-8 8" stroke="#c5cddd" strokeWidth="1.300" /></Svg>}
  </div>
);

const mag = (t: string, box?: boolean) => (
  <Svg>
    {box && <path d="M0 6.500h5M.5 6v9M0 14.500h9" stroke={NAVY} strokeDasharray="1.500 1" />}
    <circle cx={box ? 9 : 7} cy="6.500" r="4.700" stroke={NAVY} strokeWidth="1.600" />
    <path d={t} stroke={NAVY} strokeWidth="1.300" />
    <path d={box ? "M12 10l4 4.500" : "M10.500 10l4.500 4.500"} stroke={NAVY} strokeWidth="2.300" />
  </Svg>
);
const axes = (t: string, v: string, h: string) => (
  <Svg>
    <path d="M1.500 1v14" stroke={v} strokeWidth="1.300" /><path d="M1 14.500h14" stroke={h} strokeWidth="1.300" />
    <text x="9.500" y="10" textAnchor="middle" fontSize="10" fontFamily="Open Sans" fill="#333">{t}</text>
  </Svg>
);
const Tb = ({ children, on }: { children: React.ReactNode; on?: boolean }) => (
  <div className="flex w-[24px] shrink-0 justify-center">
    {on ? <div className="flex h-[18px] w-[18px] items-center justify-center rounded-[2px] border border-[#2b5a9a] bg-linear-to-b from-[#8fb4de] to-[#d2e6fa]">{children}</div> : children}
  </div>
);

const Graphics = () => (
  <section className="flex h-[689px] flex-col border border-[#d3d6db]">
    <div className="relative flex h-[31px] items-end border-b border-[#d3d6db] pl-[4px]">
      <div className="-mb-px flex items-end gap-[8px]">
        <Tab t="图形" w="w-[36px]" on />
        <Tab t="收敛图 1" w="w-[79px]" x />
        <Tab t="收敛图 2" w="w-[79px]" x />
        <Tab t="绘图 1" w="w-[66px]" x />
      </div>
      <div className="mb-[3px] ml-auto pr-[4px]"><Pin c="#c9cfda" /></div>
    </div>
    <div className="flex h-[34px] items-center pl-[1px]">
      <Tb>{mag("M4.500 6.500h5M7 4v5")}</Tb>
      <Tb>{mag("M4.500 6.500h5")}</Tb>
      <Tb>{mag("M6.500 6.500h5M9 4v5", true)}</Tb>
      <Tb><Svg><path d="M.5 .5h15v15H.5z" stroke={GRAY} /><path d="M8 1.500l2.500 3h-5zM8 14.500l2.500-3h-5zM1.500 8l3-2.500v5zM14.500 8l-3-2.500v5zM6 7.300h4v1.400H6zM7.300 6h1.400v4H7.300z" fill={BLUE} /></Svg></Tb>
      <div className="mx-[6px]"><VLine /></div>
      <div className="ml-[4px]"><Tb><Svg w={18}><path d="M8 10V1" stroke={BLUE} strokeWidth="1.300" /><path d="M8 10L1 13M1 9.500V13h3.500" stroke="#3c9a3c" strokeWidth="1.300" transform="translate(0 -3)" /><path d="M8 10l7-2M8 10l3.500 2.500 3.500-4.500" stroke="#d01e64" strokeWidth="1.200" /></Svg></Tb></div>
      <div className="mr-[7px] ml-[4px]"><Down w={8} /></div>
      <Tb>{axes("xy", "#3c9a3c", NAVY)}</Tb>
      <Tb>{axes("yz", NAVY, "#3c9a3c")}</Tb>
      <Tb>{axes("xz", NAVY, "#c02030")}</Tb>
      <Tb><Svg><path d="M13.500 6a6 6 0 1 1-5-3.500" stroke={BLUE} strokeWidth="1.600" /><path d="M8 0l4 2.500L8 5.500z" fill={BLUE} /></Svg></Tb>
      <Tb><Svg><path d="M2.500 6a6 6 0 1 0 5-3.500" stroke={BLUE} strokeWidth="1.600" /><path d="M8 0L4 2.500l4 3z" fill={BLUE} /></Svg></Tb>
      <Tb><Svg><path d="M1 2h5v3h3v6H6v3H1z" fill={BLUE} /><path d="M9 6l5-3v10L9 10" fill="#9fc0e2" stroke={BLUE} /></Svg></Tb>
      <Tb on><Svg w={14} vb="0 0 14 14"><path d="M1 1h12v12H1z" fill="#fff" stroke={NAVY} /><path d="M3 4.500h8M3 7h8M3 9.500h8M4.500 3v8M7 3v8M9.500 3v8" stroke={BLUE} strokeWidth=".9" /></Svg></Tb>
      <Tb><Svg><path d="M.5 1.500h15v13H.5z" stroke="#444" /><path d="M8 9V4" stroke={BLUE} /><path d="M8 10L4 8" stroke="#3c9a3c" strokeWidth="1.300" /><path d="M8 10l4-2M8 10l-2 2" stroke="#d01e64" strokeWidth="1.300" /></Svg></Tb>
      <div className="mx-[6px]"><VLine /></div>
      <div className="ml-[3px]"><Tb on><Svg><path d="M0 8l6-4v8zM15 1L6 7v2l9 6z" fill={BLUE} /><path d="M9 5l6-4M9 11l6 4" stroke="#fff" /><circle cx="8" cy="8" r="3" fill={NAVY} /></Svg></Tb></div>
      <Tb><Svg><path d="M1.500 6.500l3-4h10v8l-3 4h-10z" fill="#c4daf0" stroke={BLUE} /><path d="M4.500 2.500v8h10M4.500 10.500l-3 4" stroke={BLUE} /></Svg></Tb>
      <div className="mx-[6px]"><VLine /></div>
      <div className="ml-[3px]"><Tb><Svg><path d="M0 4h4l1.500-2h5L12 4h4v10H0z" fill={BLUE} /><circle cx="8" cy="8.500" r="3.600" fill="#fff" /><circle cx="8" cy="8.500" r="2.300" fill={BLUE} /></Svg></Tb></div>
      <Tb><Svg><path d="M3.500 .5h7l2 2v4h-9z" fill="#fff" stroke={BLUE} /><path d="M1 6h14v6H1z" fill={BLUE} /><path d="M3.500 10.500h9v4h-9z" fill="#fff" stroke={BLUE} /></Svg></Tb>
    </div>
    <Plot />
  </section>
);

/* ---------- results table ---------- */
const TablePanel = () => (
  <section className="mt-[5px] flex h-[172px] flex-col border border-[#d3d6db]">
    <div className="flex h-[31px] items-end border-b border-[#d3d6db] pl-[4px]">
      <div className="-mb-px flex items-end gap-[8px]">
        <Tab t="消息" w="w-[54px]" x />
        <Tab t="进度" w="w-[34px]" />
        <Tab t="日志" w="w-[34px]" />
        <Tab t="表格 5" w="w-[68px]" on x />
      </div>
      <div className="mb-[3px] ml-auto pr-[4px]"><Pin c="#c9cfda" /></div>
    </div>
    <div className="flex h-[34px] items-center pl-[6px]">
      <Tb><Svg><rect x=".5" y=".5" width="15" height="15" rx="1" fill="#d5e6f6" stroke={GRAY} /><path d="M3 3h2v2H3zM7 3h2v2H7z" fill={NAVY} /><path d="M11 3h2v2h-2z" fill="#d01e64" /><path d="M4 8v6M8 8v6M12 8v6M2.500 9.500h3M6.500 9.500h3M10.500 10.500h3" stroke={BLUE} strokeWidth="1.500" /></Svg></Tb>
      <div className="mx-[6px]"><VLine /></div>
      <div className="ml-[3px]"><Tb>{sci("8.85", "e-12", BLUE)}</Tb></div>
      <Tb>{sci1("AUTO")}</Tb>
      <Tb on>{sci("8.5", "e-1", NAVY)}</Tb>
      <Tb>{sci("850", "e-3", BLUE)}</Tb>
      <Tb>{sci1("0.85")}</Tb>
      <div className="mx-[6px]"><VLine /></div>
      <div className="ml-[3px]"><Tb on><Svg><path d="M.5 3h15v9.500H.5z" fill="#fff" stroke={BLUE} /><path d="M0 5.500h16M0 8h16M0 10.500h16M3.500 3v9.500M6.500 3v9.500M9.500 3v9.500M12.500 3v9.500" stroke={BLUE} strokeWidth=".8" /></Svg></Tb></div>
      <Tb><Svg><circle cx="8" cy="8" r="7.300" fill="#a9c8e8" stroke={BLUE} /><circle cx="8" cy="8" r="4.500" stroke="#fff" /><circle cx="8" cy="8" r="2" stroke={BLUE} /><path d="M8 0v16M0 8h16M2.500 2.500l11 11M13.500 2.500l-11 11" stroke={BLUE} strokeWidth=".9" /></Svg></Tb>
      <div className="mx-[6px]"><VLine /></div>
      <div className="ml-[3px]"><Tb>{broom}</Tb></div>
      <Tb>{trash}</Tb>
      <Tb><Svg><path d="M2 0v14h14M0 2h15v13" stroke={GRAY} /><path d="M4 3h10v10H4z" fill={MAG} /><path d="M5 4.500h8v1.500H5zM5 7h3.500v2H5zM9.500 7H13v2H9.500zM5 10h3.500v2H5zM9.500 10H13v2H9.500z" fill="#f3dce7" /></Svg></Tb>
      <Tb><Svg><path d="M.5 .5h15v15H.5z" fill={MAG} stroke="#7e1248" /></Svg></Tb>
      <Tb><Svg><path d="M.5 .5h8v11h-8zM2 3.500h5M2 6h4" stroke={GRAY} /><path d="M5.500 5.500h10v10h-10z" fill="#fff" stroke={BLUE} /><path d="M5 5h11v3H5zM7.500 10.500h2M11 10.500h3M7.500 13h2M11 13h3" stroke={BLUE} /></Svg></Tb>
      <Tb><Svg><path d="M13.500 5V2.500H.5v11h13V11M.5 5.500h13M4 5v8" stroke={GRAY} strokeWidth="1.200" /><path d="M5 8.500h9M12 5.500l3 3-3 3" stroke={BLUE} strokeWidth="1.600" /></Svg></Tb>
      <Tb>{tableIcon}</Tb>
      <div className="ml-[5px]"><Down w={7} /></div>
    </div>
    <div className="mx-[9px] -mt-px flex h-[99px] flex-col border border-[#d0d2d6] bg-[#fdfdff]">
      <div className="flex h-[28px] border-b border-[#c8cacd] bg-linear-to-b from-white from-40% to-[#f0f1f3] whitespace-nowrap">
        <div className="w-[62px] border-r border-[#dcdee2] pt-[6px] pl-[5px] leading-[20px]">freq (Hz)</div>
        <div className="w-[106px] border-r border-[#dcdee2] pt-[6px] pl-[4px] leading-[20px] tracking-[0.200px]">传播常数 (rad/m)</div>
        <div className="w-[106px] border-r border-[#dcdee2] pt-[6px] pl-[4px] leading-[20px] tracking-[0.200px]">传播常数 (rad/m)</div>
      </div>
      <div className="flex h-[20px] border-b border-[#a5a5a8] bg-white leading-[19px]">
        <div className="w-[62px] border-r border-[#a5a5a8] pl-[1px] tracking-[-0.050px]">1.9341E14</div>
        <div className="w-[106px] border-r border-[#a5a5a8] pl-[1px]">9.0523E6</div>
        <div className="w-[106px] border-r border-[#a5a5a8] pl-[1px]">9.0523E6</div>
      </div>
    </div>
  </section>
);

/* ---------- input method bar ---------- */
const IC = "#1f70c8";
const ImeBar = () => (
  <div className="absolute top-[892px] left-[1704px] h-[63px] w-[208px]">
    <div className="absolute top-[38px] left-[10px] flex h-[24px] w-[197px] items-center border border-[#a9adb3] bg-white pl-[19px]">
      {[
        <Svg><path d="M1.500 4.500h13v6h-13zM8 1v14" stroke={IC} strokeWidth="2" /></Svg>,
        <Svg w={14}><circle cx="3" cy="5" r="2" stroke={IC} strokeWidth="1.500" /><path d="M8.500 8h4c1 4-1 6-4 7l1-3c-1 0-1-3-1-4z" fill={IC} /></Svg>,
        <Svg><circle cx="8" cy="8" r="7" stroke={IC} strokeWidth="1.700" /><path d="M5.500 4.500v3M10.500 4.500v3M4 9.500c2 4 6 4 8 0" stroke={IC} strokeWidth="1.500" /></Svg>,
        <Svg><path d="M5 3c0-4 6-4 6 0v4c0 4-6 4-6 0z" fill={IC} /><path d="M3 6c0 7 10 7 10 0M8 11v4M5 15h6" stroke={IC} strokeWidth="1.500" /></Svg>,
        <Svg><rect x="0" y="2" width="16" height="12" rx="1.500" fill={IC} /><path d="M2 5h12M2 8h12" stroke="#fff" strokeWidth="1.500" strokeDasharray="2 1" /><path d="M4 11.500h8" stroke="#fff" strokeWidth="1.300" /></Svg>,
        <Svg><circle cx="6" cy="4" r="3" fill={IC} /><path d="M0 14c0-5 2-7 6-7s5 2 5 4v3z" fill={IC} /><rect x="4" y="8.500" width="12" height="7" fill="#fff" stroke={IC} strokeWidth="1" /><text x="10" y="14.700" textAnchor="middle" fontSize="7.500" fontWeight="700" fontFamily="Roboto" fill={IC}>29</text></Svg>,
        <Svg w={15}><path d="M5 1.500c1 2 5 2 6 0l5 3-2 4-2-1v8H4v-8l-2 1-2-4z" fill={IC} /></Svg>,
        <Svg w={15}><path d="M1 1h6v6H1zM1 9h6v6H1zM9 9h6v6H9z" fill={IC} /><path d="M10 2h4v4h-4z" stroke={IC} strokeWidth="1.500" /></Svg>,
      ].map((ic, k) => (
        <div key={k} className="flex w-[22px] shrink-0 justify-center">{ic}</div>
      ))}
    </div>
    <div className="absolute top-[34px] left-0">
      <Svg w={29} vb="0 0 29 29">
        <path d="M4 4L21 1c2 0 3 0 3.500 2L28 20c0 3-1 3-3 4L7 28c-2 0-3 0-3-2L1 8c0-3 1-3 3-4z" fill="#f4581c" />
        <path d="M23 8C16 4 6 7 7 11s15 2 15 6-10 6-17 3" stroke="#fff" strokeWidth="3.800" />
      </Svg>
    </div>
    <div className="absolute top-0 left-0 flex h-[30px] w-[128px] items-center justify-center border border-[#a9adb3] bg-white text-[#333] shadow">个性设置，点我看看</div>
    <div className="absolute top-[28px] left-[9px]">
      <Svg w={9} h={6} vb="0 0 9 6"><path d="M0 1l4.500 4.500L9 1" fill="#fff" stroke="#a9adb3" /><path d="M.5 0h8v1.500h-8z" fill="#fff" /></Svg>
    </div>
  </div>
);

const blobs: [number, number, string][] = [
  [512, 16, "#b8b8b0"], [567, 28, "#e9eef4"], [643, 6, "#9aa4b8"], [750, 30, "#e8683c"], [812, 26, "#18a8b8"], [932, 30, "#c02020"], [994, 30, "#f0181c"], [1062, 16, "#050505"], [1122, 12, "#58d058"], [1177, 21, "#064a70"], [1247, 16, "#c86428"], [1303, 21, "#8cc850"], [1360, 31, "#ffffff"], [1432, 15, "#f2f2f2"],
];
const TaskStrip = () => (
  <svg width="1920" height="8" viewBox="0 0 1920 8" className="block shrink-0">
    <rect width="1920" height="8" fill="#4a3c28" />
    <path d="M48 0h344v8H48z" fill="#6b5938" />
    <path d="M392 0h573v8H392z" fill="#463a26" />
    <path d="M1030 0h90l20 8H1000zM1150 0h140v8h-130zM1630 0h190l-30 8H1600z" fill="#7c7054" />
    <path d="M1466 0h160v8h-160z" fill="#2e2619" />
    {Array.from({ length: 60 }, (_, k) => (
      <path key={k} d={`M${400 + k * 25} 0l${(k % 5) * 3 - 4} 8`} stroke={k % 3 ? "#2a2116" : "#75684a"} strokeWidth="2" opacity=".6" />
    ))}
    {blobs.map(([x, w, c]) => (
      <rect key={x} x={x} y="4" width={w} height="8" rx="4" fill={c} />
    ))}
    <text x="1818" y="14" fontSize="11" fontFamily="Open Sans" fill="#fff">8:55</text>
  </svg>
);

const menu = ["定义", "几何", "材料", "物理场", "网格", "研究", "结果", "开发工具"];

export default function App() {
  return (
    <div className="relative flex h-[1048px] w-[1920px] flex-col overflow-hidden bg-[#fafbff] text-[12px] text-black [font-family:'Open_Sans','Noto_Sans_CJK_SC',sans-serif]">
      <header className="flex h-[22px] shrink-0 items-center bg-white pb-[4px]">
        <div className="flex w-[26px] pl-[3px]">
          <Svg w={13} vb="0 0 13 13"><path d="M1 2l9-2 3 7-4 6-7-2z" fill="#e3e6ec" /><rect x="3" y="2.500" width="7" height="7" rx="1.500" fill="#163f9a" /><rect x="4.500" y="5" width="3" height="3" fill="#9cc8e8" /></Svg>
        </div>
        <VLine />
        <div className="ml-[3px] flex">
          {quick.map((q, k) => (
            <div key={k} className="flex w-[24px] justify-center">{q}</div>
          ))}
        </div>
        <div className="mr-[8px] ml-[2px] pt-[2px]"><Down w={6} /></div>
        <VLine />
        <div className="ml-[577px] pb-px text-[12px] leading-[16px] tracking-[0.320px] whitespace-nowrap">脊形&amp;条载波导 - 解析解refined.mph - COMSOL Multiphysics</div>
        <div className="ml-auto flex items-center gap-[36px] pr-[20px]">
          <Svg w={11} vb="0 0 11 11"><path d="M0 5.500h11" stroke="#222" /></Svg>
          <Svg w={11} vb="0 0 11 11"><path d="M.5 3h7.500v7.500H.5zM3 3V.5h7.500V8H8" stroke="#222" /></Svg>
          <Svg w={11} vb="0 0 11 11"><path d="M.5 .5l10 10M10.500 .5l-10 10" stroke="#222" /></Svg>
        </div>
      </header>
      <nav className="mx-[3px] flex h-[25px] shrink-0 items-end border-b border-[#b9cadc] text-[#2b579a]">
        <div className="mb-px flex h-[23px] w-[56px] items-center justify-center gap-[3px] bg-[#2b579a] text-white">文件<Down c="#fff" w={8} /></div>
        <div className="-mb-px ml-[3px] flex h-[24px] w-[58px] items-center justify-center rounded-t-[2px] border border-b-0 border-[#b9cadc] bg-[#fcfdff]">主屏幕</div>
        <div className="mb-px ml-[15px] flex h-[21px] items-center gap-[26px]">
          {menu.map((m) => (
            <span key={m}>{m}</span>
          ))}
        </div>
        <div className="mr-[4px] mb-[6px] ml-auto flex h-[14px] w-[14px] items-center justify-center rounded-[2px] bg-[#3f74b5] text-[10px] font-bold text-white">?</div>
      </nav>
      <Ribbon />
      <main className="mt-[4px] ml-[3px] flex h-[866px] shrink-0 gap-[5px]">
        <ModelBuilder />
        <Settings />
        <div className="flex w-[948px] flex-col">
          <Graphics />
          <TablePanel />
        </div>
      </main>
      <footer className="mt-[4px] flex h-[29px] shrink-0 items-center bg-[#f0eded] pt-[5px] pl-[1240px]">1.59 GB | 1.93 GB</footer>
      <TaskStrip />
      <ImeBar />
    </div>
  );
}
